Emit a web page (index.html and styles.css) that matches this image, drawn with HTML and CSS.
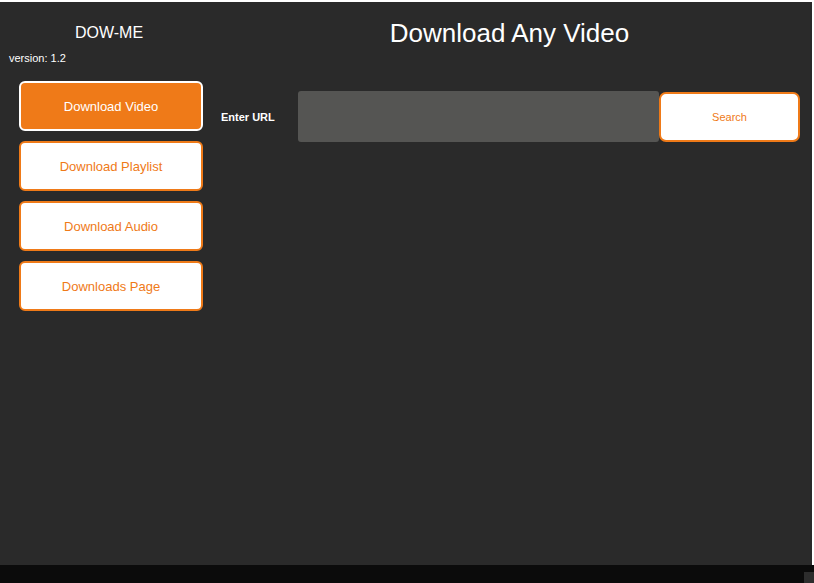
FILE: index.html
```html
<!DOCTYPE html>
<html>
<head>
<meta charset="utf-8">
<link rel="stylesheet" href="styles.css">
</head>
<body>
<div class="app">
  <aside class="sidebar">
    <div class="brand">DOW-ME</div>
    <div class="version">version: 1.2</div>
    <nav class="nav">
      <button class="nav-btn active">Download Video</button>
      <button class="nav-btn">Download Playlist</button>
      <button class="nav-btn">Download Audio</button>
      <button class="nav-btn">Downloads Page</button>
    </nav>
  </aside>
  <main class="main">
    <h1 class="title">Download Any Video</h1>
    <div class="url-row">
      <label class="url-label">Enter URL</label>
      <div class="url-input"></div>
      <button class="search-btn">Search</button>
    </div>
  </main>
</div>
<div class="statusbar"><span class="grip"></span></div>
</body>
</html>
```
FILE: styles.css
```css
* { box-sizing: border-box; }
html, body { margin: 0; padding: 0; }
body {
  background: #ffffff;
  width: 814px;
  height: 583px;
  overflow: hidden;
  font-family: "Liberation Sans", Arial, sans-serif;
}
.app {
  margin: 2px 2px 0 0;
  height: 563px;
  background: #2a2a2a;
  display: flex;
}
.sidebar {
  width: 220px;
  flex-shrink: 0;
  display: flex;
  flex-direction: column;
  padding-top: 21px;
}
.brand {
  color: #ffffff;
  font-size: 16px;
  line-height: 20px;
  text-align: center;
  padding-right: 2px;
}
.version {
  color: #ffffff;
  font-size: 11px;
  line-height: 14px;
  margin-top: 8px;
  padding-left: 9px;
}
.nav {
  display: flex;
  flex-direction: column;
  gap: 10px;
  padding-left: 19px;
  margin-top: 16px;
}
.nav-btn {
  width: 184px;
  height: 50px;
  border: 2px solid #ef7a18;
  border-radius: 6px;
  background: #ffffff;
  color: #ef7a18;
  font-family: "Liberation Sans", Arial, sans-serif;
  font-size: 13px;
  padding: 1px 0 0 0;
}
.nav-btn.active {
  background: #ef7a18;
  border-color: #ffffff;
  color: #ffffff;
}
.main {
  flex: 1;
  display: flex;
  flex-direction: column;
}
.title {
  margin: 15px 0 0 0;
  padding-right: 13px;
  color: #ffffff;
  font-weight: normal;
  font-size: 26px;
  line-height: 32px;
  text-align: center;
}
.url-row {
  display: flex;
  align-items: center;
  margin-top: 42px;
  padding-left: 1px;
}
.url-label {
  width: 77px;
  flex-shrink: 0;
  color: #ffffff;
  font-size: 11px;
  font-weight: bold;
}
.url-input {
  width: 361px;
  height: 51px;
  flex-shrink: 0;
  background: #555553;
  border-radius: 3px;
}
.search-btn {
  width: 141px;
  height: 50px;
  flex-shrink: 0;
  margin-top: 1px;
  border: 2px solid #ef7a18;
  border-radius: 7px;
  background: #ffffff;
  color: #ef7a18;
  font-family: "Liberation Sans", Arial, sans-serif;
  font-size: 11px;
  padding: 0;
}
.statusbar {
  height: 18px;
  background: #0b0b0b;
  display: flex;
  justify-content: flex-end;
  align-items: flex-end;
}
.grip {
  width: 10px;
  height: 11px;
  background: #2d2d2d;
}
```
